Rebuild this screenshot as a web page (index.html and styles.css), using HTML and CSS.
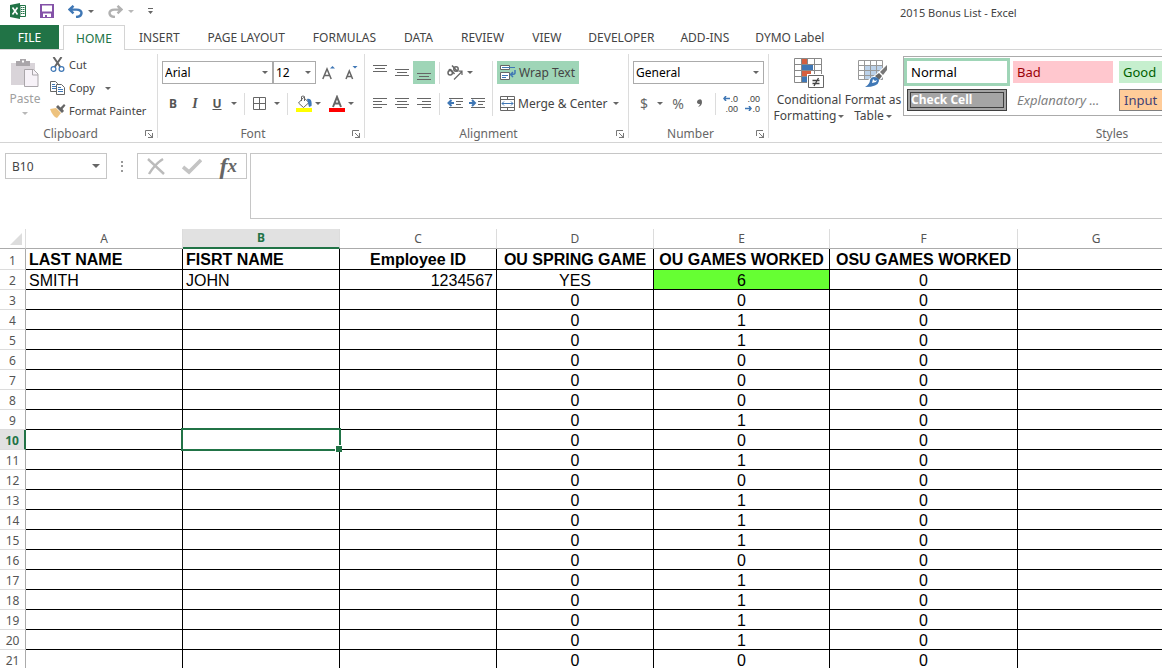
FILE: index.html
```html
<!DOCTYPE html>
<html lang="en">
<head>
<meta charset="utf-8">
<title>2015 Bonus List - Excel</title>
<link rel="stylesheet" href="styles.css">
</head>
<body>
<header class="titlebar">
  <div class="quick">
    <svg class="logo" width="16" height="16" viewBox="0 0 16 16" aria-hidden="true"><path fill="#217346" d="M0 2 10 0v16L0 14z"/><path fill="#fff" stroke="#217346" d="M10 2.500h5.500v11H10z"/><path stroke="#217346" stroke-width="1" d="M11 4.500h1.500M13 4.500h1.500M11 6.500h1.500M13 6.500h1.500M11 8.500h1.500M13 8.500h1.500M11 10.500h1.500M13 10.500h1.500"/><path stroke="#fff" stroke-width="1.600" d="m2.500 4.500 5 7m0-7-5 7"/></svg>
    <button class="q-btn" aria-label="Save"><svg width="14" height="14" viewBox="0 0 14 14"><path fill="#8452a8" fill-rule="evenodd" d="M0 0h14v14H0zM2 1.500v6h10v-6zM3 9.500V13h2v-2h2v2h4V9.500z"/></svg></button>
    <button class="q-btn q-undo" aria-label="Undo"><svg width="15" height="13" viewBox="0 0 15 13" fill="none" stroke="#3f77b5" stroke-width="2.400"><path d="M5.500.8 1.500 4.600l4 3.800M2 4.600h6.500c7 0 6.500 7-.5 7.400"/></svg><i class="caret"></i></button>
    <button class="q-btn q-redo" aria-label="Redo"><svg width="15" height="13" viewBox="0 0 15 13" fill="none" stroke="#b1b1b1" stroke-width="2.400"><path d="m9.500.8 4 3.800-4 3.800M13 4.600H6.500c-7 0-6.500 7 .5 7.400"/></svg><i class="caret light"></i></button>
    <button class="q-btn q-more" aria-label="Customize toolbar"><svg width="5" height="6" viewBox="0 0 5 6"><path fill="#666" d="M0 0h5v1H0zM0 3h5L2.500 6z"/></svg></button>
  </div>
  <h1 class="doc-title">2015 Bonus List - Excel</h1>
</header>

<nav class="tabs">
  <button class="tab file">FILE</button>
  <button class="tab active">HOME</button>
  <button class="tab">INSERT</button>
  <button class="tab">PAGE LAYOUT</button>
  <button class="tab">FORMULAS</button>
  <button class="tab">DATA</button>
  <button class="tab">REVIEW</button>
  <button class="tab">VIEW</button>
  <button class="tab tight">DEVELOPER</button>
  <button class="tab tight">ADD-INS</button>
  <button class="tab tight">DYMO Label</button>
</nav>

<section class="ribbon">
  <div class="group clipboard">
    <div class="body">
      <button class="paste">
        <svg width="30" height="30" viewBox="0 0 30 30"><path fill="#d9d4d9" d="M1 5h24v22H1z"/><path fill="#aaa6aa" d="M6 3h4V1h6v2h4v5H6z"/><path fill="#fff" d="M12 2.500h2v2h-2z"/><path fill="#f7f2f8" stroke="#aaa6aa" d="M14.500 11.500h9l4.500 4.500v12.500H14.500z"/><path fill="none" stroke="#aaa6aa" d="M22.500 11.500v5.500H28"/></svg>
        <span>Paste</span><i class="caret light"></i>
      </button>
      <div class="clip-list">
        <button class="cmd"><svg width="16" height="16" viewBox="0 0 16 16" fill="none"><path stroke="#666" stroke-width="2" d="m3.500 0 6.800 10M11.500 0 4.700 10"/><circle cx="3.500" cy="12" r="2.400" stroke="#3f77b5" stroke-width="1.200"/><circle cx="11.500" cy="12" r="2.400" stroke="#3f77b5" stroke-width="1.200"/></svg>Cut</button>
        <button class="cmd"><svg width="16" height="16" viewBox="0 0 16 16" fill="#fff"><path stroke="#666" d="M.5 1.500h5l2 2v8h-7z"/><path stroke="#3f77b5" d="M2 4.500h3M2 6.500h4M2 8.500h4"/><path stroke="#666" d="M6.500 4.500h5l3 3v7h-8z"/><path stroke="#3f77b5" d="M8 7.500h3M8 9.500h5M8 11.500h5"/></svg>Copy<i class="caret copy-caret"></i></button>
        <button class="cmd"><svg width="16" height="16" viewBox="0 0 16 16"><path fill="#edc27e" d="m0 6 6-1 5 5-4 5c-3-1-5-4-7-9z"/><path fill="#666" d="m6 4 2-2 2.500 2.500L14 1l1.500 1.500L12.500 6 14 8l-2 2z"/></svg>Format Painter</button>
      </div>
    </div>
    <div class="foot"><span>Clipboard</span><button class="launch" aria-label="Clipboard options"><svg width="8" height="8" viewBox="0 0 8 8"><path fill="none" stroke="#777" d="M.5 6V.5H7M3 3l3 3"/><path fill="#777" d="M8 3v5H3V7h2.500L7 5.500V3z"/></svg></button></div>
  </div>

  <div class="group font">
    <div class="body rows">
      <div class="row">
        <label class="combo font-name"><select aria-label="Font"><option>Arial</option></select></label>
        <label class="combo font-size"><select aria-label="Font size"><option>12</option></select></label>
        <button class="ico grow" aria-label="Increase font size"><svg width="14" height="16" viewBox="0 0 14 16"><path fill="none" stroke="#666" stroke-width="1.500" d="m.8 14 4.200-10 4.200 10M2.500 10.500h5"/><path fill="#3f77b5" d="M8 3.500 10.500 1 13 3.500z"/></svg></button>
        <button class="ico shrink" aria-label="Decrease font size"><svg width="14" height="16" viewBox="0 0 14 16"><path fill="none" stroke="#666" stroke-width="1.500" d="m1 14 3.300-8 3.300 8M2.400 11.500h4"/><path fill="#3f77b5" d="M7.500 1h5L10 3.500z"/></svg></button>
      </div>
      <div class="row">
        <button class="ico letter bold">B</button>
        <button class="ico letter italic">I</button>
        <button class="ico letter under">U</button>
        <i class="caret"></i><i class="sep"></i>
        <button class="ico borders" aria-label="Borders"><svg width="13" height="13" viewBox="0 0 13 13"><path fill="none" stroke="#666" d="M.5.5h12v12H.5zM6.500 0v13M0 6.500h13"/></svg></button>
        <i class="caret"></i><i class="sep"></i>
        <button class="ico" aria-label="Fill color"><svg width="16" height="17" viewBox="0 0 16 17"><path fill="#ff0" d="M0 13h16v4H0z"/><path fill="#fff" stroke="#666" d="m2.500 8 5-5.500 5.500 5-5.500 5z"/><path fill="none" stroke="#666" d="M5.500 6V1.500Q7 .5 8.500 1.500V6"/><path fill="#3f77b5" d="M11 4c4-1 5 2 4.500 7L13 12z"/></svg></button>
        <i class="caret"></i>
        <button class="ico ink" aria-label="Font color"><svg width="16" height="17" viewBox="0 0 16 17"><path fill="red" d="M0 13h16v4H0z"/><path fill="none" stroke="#666" stroke-width="2" d="m4 12 4-10 4 10M5.500 8.500h5"/></svg></button>
        <i class="caret"></i>
      </div>
    </div>
    <div class="foot"><span>Font</span><button class="launch" aria-label="Font options"><svg width="8" height="8" viewBox="0 0 8 8"><path fill="none" stroke="#777" d="M.5 6V.5H7M3 3l3 3"/><path fill="#777" d="M8 3v5H3V7h2.500L7 5.500V3z"/></svg></button></div>
  </div>

  <div class="group align">
    <div class="body align-body">
      <div class="align-grid">
        <button class="ico" aria-label="Top align"><svg width="14" height="16" viewBox="0 0 14 16"><path stroke="#666" d="M0 .5h14M2 3.500h10M0 6.500h14"/></svg></button>
        <button class="ico" aria-label="Middle align"><svg width="14" height="16" viewBox="0 0 14 16"><path stroke="#666" d="M0 4.500h14M2 7.500h10M0 10.500h14"/></svg></button>
        <button class="ico on" aria-label="Bottom align"><svg width="14" height="16" viewBox="0 0 14 16"><path stroke="#666" d="M0 8.500h14M2 11.500h10M0 14.500h14"/></svg></button>
        <i class="sep"></i>
        <button class="ico rotate" aria-label="Orientation"><svg width="16" height="15" viewBox="0 0 16 15" fill="none" stroke="#666" stroke-width="1.500"><ellipse cx="3.200" cy="7.800" rx="2.200" ry="2.300"/><path d="M1.800 4.800q1.500-1 2.700.6l3 3.600M5 .5l5.500 6"/><circle cx="9" cy="4" r="2.200"/><path stroke-width="1.200" d="m7 14.500 8-8M11.500 6.200H15v3.800"/></svg><i class="caret"></i></button>
        <button class="ico" aria-label="Align left"><svg width="14" height="11" viewBox="0 0 14 11"><path stroke="#666" d="M0 .5h14M0 3.500h9M0 6.500h14M0 9.500h9"/></svg></button>
        <button class="ico" aria-label="Center"><svg width="14" height="11" viewBox="0 0 14 11"><path stroke="#666" d="M0 .5h14M2 3.500h10M0 6.500h14M2 9.500h10"/></svg></button>
        <button class="ico" aria-label="Align right"><svg width="14" height="11" viewBox="0 0 14 11"><path stroke="#666" d="M0 .5h14M5 3.500h9M0 6.500h14M5 9.500h9"/></svg></button>
        <i class="sep"></i>
        <div class="indents">
          <button class="ico" aria-label="Decrease indent"><svg width="16" height="11" viewBox="0 0 16 11"><path stroke="#666" d="M2 .5h14M9 3.500h7M9 6.500h5M2 9.500h14"/><path fill="none" stroke="#3f77b5" stroke-width="2" d="M4.500 2 1.500 5l3 3M2 5h5"/></svg></button>
          <button class="ico" aria-label="Increase indent"><svg width="16" height="11" viewBox="0 0 16 11"><path stroke="#666" d="M2 .5h14M9 3.500h7M9 6.500h5M2 9.500h14"/><path fill="none" stroke="#3f77b5" stroke-width="2" d="m3 2 3 3-3 3M0 5h6"/></svg></button>
        </div>
      </div>
      <div class="merge-col">
        <button class="cmd wrap"><svg width="16" height="16" viewBox="0 0 16 16"><path fill="#fff" stroke="#666" d="M.5.500h9v4h-9zM.5 7.500h9v7h-9z"/><path fill="none" stroke="#3f77b5" d="M2 2.500h13M2 10.500h6M2 12.500h4"/><path fill="none" stroke="#3f77b5" stroke-width="1.500" d="M15 5v3q0 1.500-4 1.500M13 7l-2.500 2.500L13 12"/></svg>Wrap Text</button>
        <button class="cmd merge"><svg width="15" height="15" viewBox="0 0 15 15"><path fill="#fff" stroke="#666" d="M.5.5h14v14H.5zM.5 3.500h14M.5 11.500h14M7.500.5v3M7.500 11.500v3"/><path fill="none" stroke="#3f77b5" d="M2 7.500h11M4 5.500l-2 2 2 2M11 5.500l2 2-2 2"/></svg>Merge &amp; Center<i class="caret"></i></button>
      </div>
    </div>
    <div class="foot"><span>Alignment</span><button class="launch" aria-label="Alignment options"><svg width="8" height="8" viewBox="0 0 8 8"><path fill="none" stroke="#777" d="M.5 6V.5H7M3 3l3 3"/><path fill="#777" d="M8 3v5H3V7h2.500L7 5.500V3z"/></svg></button></div>
  </div>

  <div class="group number">
    <div class="body rows">
      <div class="row"><label class="combo format"><select aria-label="Number format"><option>General</option></select></label></div>
      <div class="row">
        <button class="ico sign">$</button><i class="caret"></i>
        <button class="ico sign">%</button>
        <button class="ico comma" aria-label="Comma style"><svg width="6" height="9" viewBox="0 0 6 9"><path fill="#666" d="M1 1q4-2 4 2 0 4-4 5 2-2 2-3-3 0-3-2 0-1 1-2z"/></svg></button>
        <i class="sep"></i>
        <button class="ico dec" aria-label="Increase decimal"><svg width="7" height="5" viewBox="0 0 7 5"><path fill="none" stroke="#3f77b5" stroke-width="1.500" d="M3 0 1 2.500 3 5M1 2.500h6"/></svg><span>.0</span><span class="wide">.00</span></button>
        <button class="ico dec" aria-label="Decrease decimal"><span class="wide">.00</span><svg width="7" height="5" viewBox="0 0 7 5"><path fill="none" stroke="#3f77b5" stroke-width="1.500" d="m4 0 2 2.500L4 5M0 2.500h6"/></svg><span>.0</span></button>
      </div>
    </div>
    <div class="foot"><span>Number</span><button class="launch" aria-label="Number options"><svg width="8" height="8" viewBox="0 0 8 8"><path fill="none" stroke="#777" d="M.5 6V.5H7M3 3l3 3"/><path fill="#777" d="M8 3v5H3V7h2.500L7 5.500V3z"/></svg></button></div>
  </div>

  <div class="group styles">
    <div class="body styles-body">
      <button class="big"><svg width="30" height="31" viewBox="0 0 30 31"><path fill="#fff" stroke="#888" d="M.5.500h27v24H.5zM7.500 0v24M13.500 0v24M20.500 0v24M0 6.500h27M0 12.500h27M0 18.500h27"/><path fill="#d65f3e" d="M8 1h5v5H8zM8 13h9v5H8z"/><path fill="#3f77b5" d="M8 7h11v5H8zM8 19h5v5H8z"/><path fill="#fff" stroke="#fff" stroke-width="3" d="M14.500 17.500h15v12h-15z"/><path fill="#fff" stroke="#666" d="M14.500 17.500h15v12h-15z"/><path stroke="#444" stroke-width="1.300" d="M18.500 22.500h7M18.500 25.500h7M24.500 20l-4.500 8"/></svg><span>Conditional<br>Formatting<i class="caret"></i></span></button>
      <button class="big"><svg width="30" height="31" viewBox="0 0 30 31"><path fill="#fff" d="M.5 2.500h24v19H.5z"/><path fill="#bcd2ea" d="M7 8h18v14H7z"/><path fill="none" stroke="#999" d="M.5 2.500h24v19H.5zM.5 7.500h24M.5 12.500h24M.5 17.500h24M6.500 2.500v19M12.500 2.500v19M18.500 2.500v19"/><path fill="#fff" d="M30 5v9l-9 9-6 7H5l6-9 6-4z"/><path fill="#777" d="M29 7v5l-4 5-3-3z"/><path fill="#666" d="m21 15 3 3-3 4-4-4z"/><path fill="#3f77b5" d="M16 19q5 0 5 4-1 6-14 6 5-3 5-7 1-3 4-3z"/><path fill="#fff" d="m14 25 1-4 2 2 2-1-1 2z"/></svg><span>Format as<br>Table<i class="caret"></i></span></button>
      <div class="gallery">
        <button class="style normal">Normal</button>
        <button class="style bad">Bad</button>
        <button class="style good">Good</button>
        <button class="style check">Check Cell</button>
        <button class="style expl">Explanatory ...</button>
        <button class="style input">Input</button>
      </div>
    </div>
    <div class="foot"><span>Styles</span></div>
  </div>
</section>

<section class="formula">
  <label class="namebox"><input aria-label="Name box" value="B10"><i class="caret big-caret"></i></label>
  <svg class="dots" width="2" height="11" viewBox="0 0 2 11"><path fill="#999" d="M0 0h2v2H0zM0 4h2v2H0zM0 9h2v2H0z"/></svg>
  <div class="fx-box">
    <button class="ico" aria-label="Cancel"><svg width="18" height="17" viewBox="0 0 18 17"><path fill="none" stroke="#bbb" stroke-width="2.400" d="m1 1 16 15M16 1Q8 6 2 16"/></svg></button>
    <button class="ico" aria-label="Enter"><svg width="20" height="17" viewBox="0 0 20 17"><path fill="none" stroke="#c4c4c4" stroke-width="3.600" d="m1 9 6 5L19 2"/></svg></button>
    <button class="ico fx" aria-label="Insert function"><span class="f">f</span><span>x</span></button>
  </div>
  <textarea class="entry" aria-label="Formula"></textarea>
</section>

<main class="sheet">
<table class="grid">
  <colgroup><col class="c-head"><col class="c-std"><col class="c-std"><col class="c-std"><col class="c-std"><col class="c-e"><col class="c-f"><col class="c-std"></colgroup>
  <thead><tr><th class="corner"><svg width="12" height="12" viewBox="0 0 12 12"><path fill="#ddd" d="M12 0v12H0z"/></svg></th><th>A</th><th class="sel">B</th><th>C</th><th>D</th><th>E</th><th>F</th><th>G</th></tr></thead>
  <tbody>
  <tr class="names"><th>1</th><td class="l">LAST NAME</td><td class="l">FISRT NAME</td><td>Employee ID</td><td>OU SPRING GAME</td><td>OU GAMES WORKED</td><td>OSU GAMES WORKED</td><td></td></tr>
  <tr><th>2</th><td class="l">SMITH</td><td class="l">JOHN</td><td class="r">1234567</td><td>YES</td><td class="lime">6</td><td>0</td><td></td></tr>
  <tr><th>3</th><td></td><td></td><td></td><td>0</td><td>0</td><td>0</td><td></td></tr>
  <tr><th>4</th><td></td><td></td><td></td><td>0</td><td>1</td><td>0</td><td></td></tr>
  <tr><th>5</th><td></td><td></td><td></td><td>0</td><td>1</td><td>0</td><td></td></tr>
  <tr><th>6</th><td></td><td></td><td></td><td>0</td><td>0</td><td>0</td><td></td></tr>
  <tr><th>7</th><td></td><td></td><td></td><td>0</td><td>0</td><td>0</td><td></td></tr>
  <tr><th>8</th><td></td><td></td><td></td><td>0</td><td>0</td><td>0</td><td></td></tr>
  <tr><th>9</th><td></td><td></td><td></td><td>0</td><td>1</td><td>0</td><td></td></tr>
  <tr><th class="sel">10</th><td></td><td class="current"><span class="cursor"></span></td><td></td><td>0</td><td>0</td><td>0</td><td></td></tr>
  <tr><th>11</th><td></td><td></td><td></td><td>0</td><td>1</td><td>0</td><td></td></tr>
  <tr><th>12</th><td></td><td></td><td></td><td>0</td><td>0</td><td>0</td><td></td></tr>
  <tr><th>13</th><td></td><td></td><td></td><td>0</td><td>1</td><td>0</td><td></td></tr>
  <tr><th>14</th><td></td><td></td><td></td><td>0</td><td>1</td><td>0</td><td></td></tr>
  <tr><th>15</th><td></td><td></td><td></td><td>0</td><td>1</td><td>0</td><td></td></tr>
  <tr><th>16</th><td></td><td></td><td></td><td>0</td><td>0</td><td>0</td><td></td></tr>
  <tr><th>17</th><td></td><td></td><td></td><td>0</td><td>1</td><td>0</td><td></td></tr>
  <tr><th>18</th><td></td><td></td><td></td><td>0</td><td>1</td><td>0</td><td></td></tr>
  <tr><th>19</th><td></td><td></td><td></td><td>0</td><td>1</td><td>0</td><td></td></tr>
  <tr><th>20</th><td></td><td></td><td></td><td>0</td><td>1</td><td>0</td><td></td></tr>
  <tr><th>21</th><td></td><td></td><td></td><td>0</td><td>0</td><td>0</td><td></td></tr>
  </tbody>
</table>
</main>
</body>
</html>
```

FILE: styles.css
```css
* { box-sizing: border-box; }
body {
  margin: 0;
  height: 100vh;
  overflow: hidden;
  display: flex;
  flex-direction: column;
  background: #fff;
  color: #444;
  font: 12px/16px "Noto Sans", "Open Sans", sans-serif;
}
button, input, select, textarea { font: inherit; color: inherit; }
button {
  border: 0;
  padding: 0;
  background: none;
  display: flex;
  align-items: center;
  justify-content: center;
  white-space: nowrap;
}
svg { display: block; flex: none; }

.caret {
  flex: none;
  border: 3px solid transparent;
  border-top-color: #666;
  border-bottom: 0;
}
.caret.light { border-top-color: #b8b8b8; }
.caret.big-caret { border-width: 4px 4px 0; }
.sep { width: 1px; height: 22px; background: #dcdcdc; flex: none; }

/* Title bar */
.titlebar { flex: none; height: 25px; display: flex; align-items: flex-start; }
.quick { width: 200px; height: 22px; padding-left: 10px; display: flex; align-items: center; flex: none; }
.q-btn { margin-left: 14px; gap: 5px; }
.doc-title { margin: 0; flex: 1; padding: 5px 0 0 700px; font-size: 11px; font-weight: 400; line-height: 16px; white-space: nowrap; }

/* Ribbon tabs */
.tabs { flex: none; height: 25px; display: flex; border-bottom: 1px solid #d4d4d4; }
.tab { height: 24px; padding: 2px 14px 0; }
.tab.tight { padding: 2px 13px 0; }
.tab.file { width: 59px; padding: 2px 0 0; margin-right: 4px; background: #217346; color: #fff; }
.tab.active { width: 62px; padding: 1px 0 0; height: 25px; border: 1px solid #d4d4d4; border-bottom: 0; background: #fff; color: #217346; }

/* Ribbon */
.ribbon { flex: none; height: 93px; display: flex; overflow: hidden; padding: 4px 0; border-bottom: 1px solid #d4d4d4; }
.group { flex: none; display: flex; flex-direction: column; border-right: 1px solid #dcdcdc; }
.clipboard { width: 158px; }
.font { width: 207px; }
.align { width: 264px; }
.number { width: 140px; }
.styles { width: 687px; }
.body { flex: 1; display: flex; }
.foot { height: 8px; line-height: 8px; display: flex; align-items: center; color: #666; padding: 0 4px 0 0; }
.foot span { flex: 1; text-align: center; }
.launch { width: 8px; }
.clipboard .foot span { padding-right: 4px; }
.font .foot span, .align .foot span { padding-right: 4px; }
.number .foot span { padding-right: 4px; }
.styles .foot { padding: 0; }

.paste { width: 50px; flex-direction: column; justify-content: flex-start; padding-top: 4px; gap: 3px; color: #a0a0a0; }
.paste .caret { margin-top: 2px; }
.clip-list { display: flex; flex-direction: column; }
.cmd { height: 23px; gap: 3px; justify-content: flex-start; }
.clip-list .cmd { height: 22px; margin-bottom: 1px; font-size: 11px; }
.cmd .copy-caret { margin-left: 7px; }

.rows { flex-direction: column; gap: 8px; padding: 7px 0 0 4px; }
.row { display: flex; align-items: center; height: 23px; }
.ico { flex: none; }
.combo { position: relative; display: block; height: 23px; border: 1px solid #ababab; color: #000; }
.combo select { display: block; width: 100%; height: 21px; padding: 0 2px; border: 0; background: #fff; appearance: none; }
.combo::after {
  content: "";
  position: absolute;
  right: 4px;
  top: 9px;
  border: 3px solid transparent;
  border-top-color: #666;
  border-bottom: 0;
}
.font-name { width: 111px; }
.font-size { width: 43px; }
.grow { margin-left: 6px; }
.shrink { margin-left: 9px; }
.letter { width: 22px; color: #555; font-weight: 700; }
.italic { font-family: "Liberation Serif", serif; font-style: italic; font-size: 14px; }
.under { text-decoration: underline; }
.font .row .caret { margin: 0 5px 0 3px; }
.font .row .sep { margin: 0 8px 0 2px; }
.borders { padding-right: 5px; }
.ink { margin-left: 3px; }

.align-body { padding: 7px 0 0 4px; }
.align-grid { display: grid; grid-template-columns: 22px 22px 22px 8px 49px; grid-template-rows: 23px 23px; row-gap: 8px; align-content: start; align-items: center; width: 124px; border-right: 1px solid #dcdcdc; height: 55px; }
.align-grid .ico { height: 23px; }
.align-grid .sep { justify-self: center; }
.on { background: #9fd5b7; }
.rotate { justify-content: flex-start; gap: 4px; padding-left: 4px; }
.indents { display: flex; gap: 6px; padding-left: 4px; }
.merge-col { display: flex; flex-direction: column; gap: 8px; padding-left: 4px; }
.wrap { width: 82px; padding-left: 3px; background: #9fd5b7; }
.merge { padding-left: 3px; }
.merge .caret { margin-left: 2px; }

.format { width: 131px; }
.sign { width: 22px; font-size: 14px; color: #666; }
.sign + .caret { margin: 0 4px 0 2px; }
.comma { margin-left: 8px; }
.number .sep { margin: 0 7px 0 12px; }
.dec { width: 15px; flex-wrap: wrap; justify-content: flex-end; margin-right: 7px; font: 9px/10px "Liberation Sans", Arial, sans-serif; color: #444; }
.wide { width: 15px; text-align: right; }

.styles-body { padding-left: 8px; }
.big { flex-direction: column; justify-content: flex-start; padding-top: 4px; gap: 3px; width: 64px; }
.big + .big { width: 56px; margin-left: 4px; }
.big .caret { display: inline-block; margin-left: 2px; vertical-align: 2px; }
.gallery { flex: 1; margin: 2px 0 0 2px; height: 60px; border: 1px solid #ababab; padding: 4px 3px; display: grid; grid-template-columns: repeat(5, 100px); grid-template-rows: 22px 22px; gap: 6px; }
.style { justify-content: flex-start; padding-left: 4px; font-size: 13px; }
.normal { outline: 3px solid #9fd5b7; color: #000; }
.bad { background: #ffc7ce; color: #9c0006; }
.good { background: #c6efce; color: #006100; }
.check { grid-row: 2; background: #a5a5a5; color: #fff; font-weight: 700; font-size: 12px; border: 4px double #3f3f3f; padding-left: 0; }
.expl { grid-row: 2; font-style: italic; color: #7f7f7f; }
.input { grid-row: 2; background: #ffcc99; color: #3f3f76; border: 1px solid #7f7f7f; }

/* Formula bar */
.formula { flex: none; height: 86px; display: flex; align-items: flex-start; padding: 10px 0 0 5px; }
.namebox { width: 102px; height: 26px; border: 1px solid #c6c6c6; display: flex; align-items: center; padding: 0 6px; }
.namebox input { flex: 1; min-width: 0; border: 0; padding: 2px 0 0; outline: 0; }
.dots { margin: 8px 14px 0; }
.fx-box { width: 110px; height: 26px; border: 1px solid #c6c6c6; display: flex; align-items: center; justify-content: space-between; padding: 0 9px; }
.fx { font: italic 700 19px/24px "Liberation Serif", serif; color: #666; }
.f { font-size: 24px; }
.entry { flex: 1; height: 66px; margin-left: 3px; border: 1px solid #c6c6c6; border-right: 0; resize: none; outline: 0; }

/* Worksheet */
.sheet { flex: 1; min-height: 0; overflow: hidden; }
.grid { width: 1175px; table-layout: fixed; border-collapse: separate; border-spacing: 0; color: #000; font: 16px/17px "Liberation Sans", Arial, sans-serif; }
.c-head { width: 26px; }
.c-std { width: 157px; }
.c-e { width: 176px; }
.c-f { width: 188px; }
.grid th { padding: 0; height: 20px; font: 12px/19px "Noto Sans", "Open Sans", sans-serif; color: #555; border-right: 1px solid #ababab; border-bottom: 1px solid #dcdcdc; }
.grid tbody th { padding-top: 2px; line-height: 17px; }
.grid thead th { border-right-color: #dcdcdc; border-bottom-color: #ababab; }
.corner svg { margin: 0 3px 0 auto; }
.grid th.sel { background: #e1e1e1; color: #217346; font-weight: 700; }
.grid thead th.sel { border-bottom: 2px solid #217346; line-height: 18px; }
.grid tbody th.sel { border-right: 2px solid #217346; }
.grid td { padding: 2px 3px 0; height: 20px; text-align: center; border-right: 1px solid #000; border-bottom: 1px solid #000; white-space: nowrap; }
.grid .names th { height: 21px; }
.grid .names td { height: 21px; padding-top: 1px; font-weight: 700; line-height: 18px; }
.grid .l { text-align: left; }
.grid .r { text-align: right; }
.grid .lime { background: #66ff33; }
.current { position: relative; }
.cursor { position: absolute; inset: -2px; border: 2px solid #217346; }
.cursor::after { content: ""; position: absolute; right: -3px; bottom: -3px; width: 6px; height: 6px; background: #217346; border: 1px solid #fff; border-width: 1px 0 0 1px; }
```
